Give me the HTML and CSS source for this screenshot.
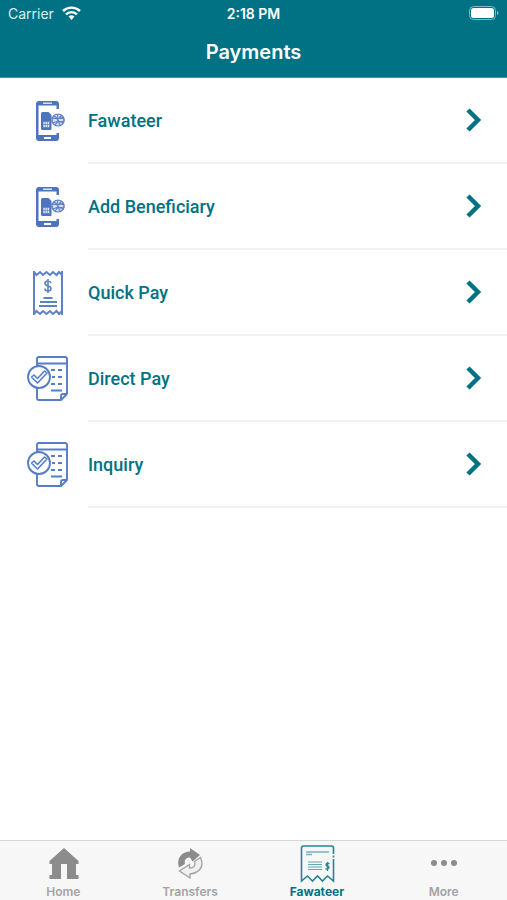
FILE: index.html
```
<!DOCTYPE html>
<html lang="en">
<head>
    <meta charset="UTF-8">
    <meta name="viewport" content="width=device-width, initial-scale=1.0">
    <title>Payments</title>
    <link rel="stylesheet" href="styles.css">
</head>
<body>

    <!-- shared icons -->
    <svg class="sprite" aria-hidden="true">
        <symbol id="icon-phone" viewBox="-7 0 44 48">
            <path d="M26 12V7a3 3 0 0 0-3-3H6a3 3 0 0 0-3 3v34a3 3 0 0 0 3 3H23a3 3 0 0 0 3-3V36h-2.500v2H5.500V8.500h18V12z" fill="#4f74bd"/>
            <path d="M10 6.200h9" stroke="#fff" stroke-width="1.200"/>
            <path d="M11 41h7" stroke="#fff" stroke-width="2"/>
            <path d="M9.500 15h6l3 3V32a1 1 0 0 1-1 1h-8a1.500 1.500 0 0 1-1.500-1.500v-15A1.500 1.500 0 0 1 9.500 15z" fill="#4f74bd"/>
            <path d="M10 24.500h6.500v6H10zM10 27.500h6.500M12.200 24.500v6M14.400 24.500v6" fill="#dfe6f5" stroke="#4f74bd" stroke-width=".6"/>
            <g fill="none" stroke="#5f80c4">
                <circle cx="25" cy="23" r="6" fill="#d5def1" stroke-width="1.200"/>
                <path d="M19 21l6 1 6-2M20 26l5-2 6 2M21 19l4 3 4-4M25 17l-1 5 3 6M22 28l4-5" stroke-width="1.100"/>
                <path d="M17 21h4M17 24h3M27 21l5 1M26 25l6-1"/>
            </g>
        </symbol>
        <symbol id="icon-bill" viewBox="-2 0 44 48">
            <g fill="none" stroke="#5c82c7" stroke-width="2">
                <path d="M6 2v44M34 2v44"/>
                <path d="M6 3l2.500 3L12 3l3 3 3.500-3L22 6l3-3 3.500 3L31 3l3 3M6 45l2.500-3 3.500 3 3-3 3.500 3 3.500-3 3 3 3.500-3 2.500 3 3-3"/>
                <path d="M15.500 29h9M12 33h17M11 37h18"/>
                <path d="M23 14c-.5-1.500-1.500-2-3-2-2 0-3 1-3 2.500 0 3.500 6 1.500 6 5 0 1.500-1 2.500-3 2.500s-3-1-3-2.500M20 10v14" stroke-width="1.600"/>
            </g>
        </symbol>
        <symbol id="icon-check-list" viewBox="0 0 44 48">
            <g fill="none" stroke="#567dc5" stroke-width="1.900" stroke-linejoin="round">
                <path d="M11 12V4a2 2 0 0 1 2-2h26a2 2 0 0 1 2 2v35l-6 6H13a2 2 0 0 1-2-2V33M11 8.500h30M35 45v-4a2 2 0 0 1 2-2h4"/>
                <circle cx="13" cy="22" r="11"/>
                <path d="M5.500 22l2.500-2 3.500 3.500 7-7.500 2.500 2-9.500 10z" stroke-width="1.600"/>
                <path d="M25 15h4M32 15h4M26 22h3M32 22h4M25 29h4M32 29h4M25 35.500h11"/>
            </g>
        </symbol>
        <symbol id="icon-chevron" viewBox="0 0 18 26">
            <path d="M3 3l10 10L3 23" fill="none" stroke="#017284" stroke-width="4.500"/>
        </symbol>
    </svg>

    <header class="top-bar">
        <div class="status">
            <div class="carrier">
                <span>Carrier</span>
                <svg width="19" height="14" viewBox="0 0 19 14" aria-label="Wi-Fi">
                    <g fill="none" stroke="#fff" stroke-width="2.400">
                        <path d="M1 5a12.500 12.500 0 0 1 17 0"/>
                        <path d="M4 8.300a8 8 0 0 1 11 0"/>
                    </g>
                    <path d="M6.500 10.500a4.500 4.500 0 0 1 6 0L9.500 14z" fill="#fff"/>
                </svg>
            </div>
            <time>2:18 PM</time>
            <svg class="battery" width="30" height="14" viewBox="0 0 30 14" aria-label="Battery">
                <rect x=".5" y=".5" width="26" height="13" rx="4" fill="none" stroke="#7fb8c1"/>
                <rect x="2" y="2" width="23" height="10" rx="2.500" fill="#fff"/>
                <path d="M28 5c2 .5 2 3.500 0 4z" fill="#7fb8c1"/>
            </svg>
        </div>
        <h1>Payments</h1>
    </header>

    <main>
        <ul class="menu">
            <li>
                <a href="#fawateer">
                    <svg class="icon"><use href="#icon-phone"/></svg>
                    <span class="label">Fawateer<svg class="chevron"><use href="#icon-chevron"/></svg></span>
                </a>
            </li>
            <li>
                <a href="#add-beneficiary">
                    <svg class="icon"><use href="#icon-phone"/></svg>
                    <span class="label">Add Beneficiary<svg class="chevron"><use href="#icon-chevron"/></svg></span>
                </a>
            </li>
            <li>
                <a href="#quick-pay">
                    <svg class="icon"><use href="#icon-bill"/></svg>
                    <span class="label">Quick Pay<svg class="chevron"><use href="#icon-chevron"/></svg></span>
                </a>
            </li>
            <li>
                <a href="#direct-pay">
                    <svg class="icon"><use href="#icon-check-list"/></svg>
                    <span class="label">Direct Pay<svg class="chevron"><use href="#icon-chevron"/></svg></span>
                </a>
            </li>
            <li>
                <a href="#inquiry">
                    <svg class="icon"><use href="#icon-check-list"/></svg>
                    <span class="label">Inquiry<svg class="chevron"><use href="#icon-chevron"/></svg></span>
                </a>
            </li>
        </ul>
    </main>

    <nav class="tabs">
        <a href="#home">
            <svg width="36" height="40" viewBox="0 0 36 40">
                <path d="M19 4l14.500 13v3H31v11h2.500v4H22V20h-6v15H4.500v-4H7V20H4.500v-3z" fill="#8c8c8c"/>
            </svg>
            <span>Home</span>
        </a>
        <a href="#transfers">
            <svg width="36" height="40" viewBox="0 0 36 40">
                <path d="M7 23.500C4 14 10 7.500 18 7.500V4l10 7-7.500 6.500-2.500-4c-4 0-6 2.500-5 6.500z" fill="#8c8c8c"/>
                <path d="M28.500 13.500c4 9-1 15.500-10.500 16.500v4L7.500 27l10-6.500V24c4.500 0 6.500-3 5-6.500z" fill="#f1f1f1" stroke="#a5a5a5" stroke-width="1.400"/>
            </svg>
            <span>Transfers</span>
        </a>
        <a href="#fawateer" class="active" aria-current="page">
            <svg width="36" height="40" viewBox="0 0 36 40">
                <g fill="none" stroke="#268590" stroke-width="1.600">
                    <path d="M34.500 10V4a2 2 0 0 0-2-2h-28a2 2 0 0 0-2 2v33l6-5 5 5 5-5 5 5 5-5 6 5V15M34.500 11.500v2"/>
                    <path d="M7 8h23M7 10.500h6" stroke="#75b3bb" stroke-width="1.400"/>
                    <path d="M9 18h14M9 20.500h14M9 23h14M9 25.500h14" stroke="#62a8b1" stroke-width="1.200"/>
                    <path d="M30.500 19.500h-2c-2 0-2 2.500 0 2.500s2 3 0 3h-2M28.500 18v9" stroke-width="1.300"/>
                </g>
            </svg>
            <span>Fawateer</span>
        </a>
        <a href="#more">
            <svg width="36" height="40" viewBox="0 0 36 40" fill="#8c8c8c">
                <circle cx="8" cy="19" r="3"/>
                <circle cx="18" cy="19" r="3"/>
                <circle cx="28" cy="19" r="3"/>
            </svg>
            <span>More</span>
        </a>
    </nav>

</body>
</html>
```
FILE: styles.css
```
* {
    box-sizing: border-box;
}
body {
    margin: 0;
    min-height: 100vh;
    display: flex;
    flex-direction: column;
    background-color: #fff;
    font-family: Inter, "Liberation Sans", sans-serif;
}
a {
    color: inherit;
    text-decoration: none;
}
.sprite {
    display: none;
}
.top-bar {
    background-color: #017284;
    border-bottom: 1px solid #3d95a2;
    color: #fff;
    padding-bottom: 11px;
}
.status {
    display: grid;
    grid-template-columns: 1fr auto 1fr;
    align-items: center;
    height: 26px;
    padding: 0 8px;
    font-size: 14px;
}
.carrier {
    display: flex;
    align-items: center;
    gap: 8px;
    color: #dceef0;
}
.status time {
    font-size: 14px;
    font-weight: 600;
}
.battery {
    justify-self: end;
}
h1 {
    margin: 12px 0 0;
    font-size: 20px;
    font-weight: 600;
    line-height: 28px;
    text-align: center;
}
main {
    flex: 1;
}
.menu {
    list-style: none;
    margin: 0;
    padding: 0;
}
.menu a {
    display: flex;
    align-items: center;
    height: 86px;
    padding-left: 26px;
    gap: 18px;
}
.icon {
    width: 44px;
    height: 48px;
    flex: none;
}
.label {
    flex: 1;
    align-self: stretch;
    display: flex;
    align-items: center;
    justify-content: space-between;
    padding-right: 24px;
    border-bottom: 2px solid #f1f1f1;
    font-family: Roboto, "Liberation Sans", sans-serif;
    font-size: 18px;
    font-weight: 500;
    color: #017284;
}
.chevron {
    width: 18px;
    height: 26px;
}
.tabs {
    display: grid;
    grid-template-columns: repeat(4, 1fr);
    border-top: 1px solid #d8d8d8;
    background-color: #f7f7f7;
    color: #a3a3a3;
    font-size: 12px;
    font-weight: 600;
    line-height: 16px;
}
.tabs a {
    display: flex;
    flex-direction: column;
    align-items: center;
    padding: 3px 0 0;
}
.tabs .active {
    color: #017284;
    font-weight: 700;
}
```
